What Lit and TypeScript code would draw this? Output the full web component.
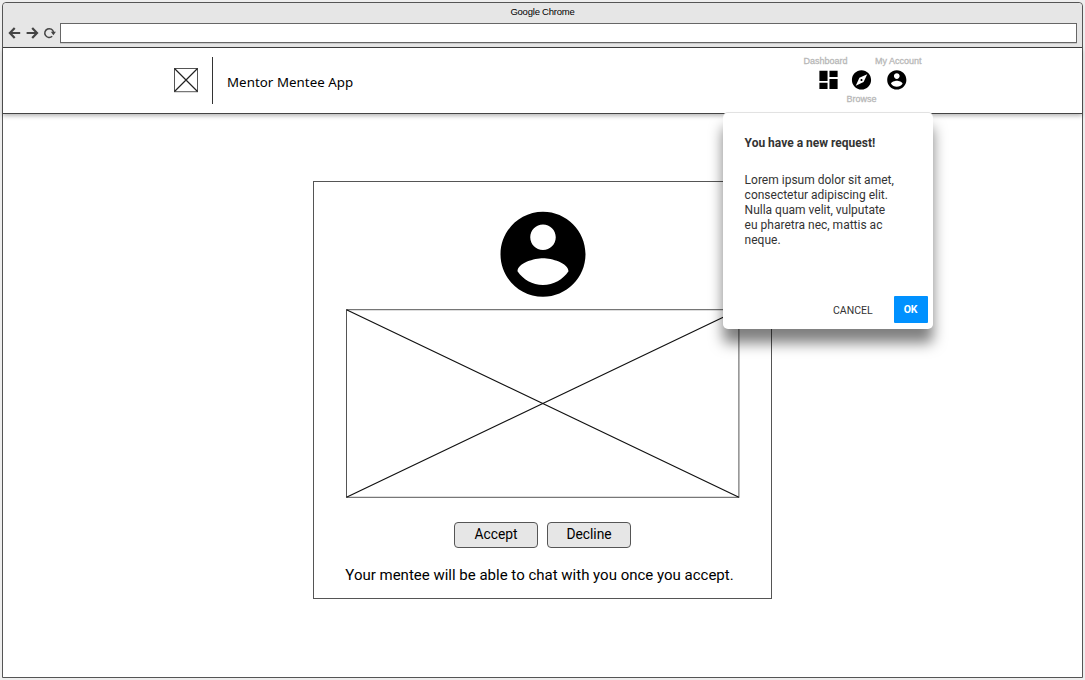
import { LitElement, html, css, svg } from "lit";
import { customElement, property } from "lit/decorators.js";

const accountPath = svg`<path d="M12 2C6.48 2 2 6.48 2 12s4.48 10 10 10 10-4.48 10-10S17.52 2 12 2zm0 3c1.66 0 3 1.34 3 3s-1.34 3-3 3-3-1.34-3-3 1.34-3 3-3zm0 14.2c-2.5 0-4.71-1.28-6-3.22.03-1.99 4-3.08 6-3.08 1.99 0 5.97 1.09 6 3.08-1.29 1.94-3.5 3.22-6 3.22z"/>`;

@customElement("browser-bar")
export class BrowserBar extends LitElement {
  static styles = css`
    :host { display: block; box-sizing: border-box; height: 45px; background: #e6e6e6; border-bottom: 1px solid #3d3d3d; border-radius: 4px 4px 0 0; font-family: "Liberation Sans", Arial, sans-serif; }
    .title { height: 20px; line-height: 18px; font-size: 9.5px; letter-spacing: -0.22px; text-align: center; color: #000; }
    .tools { display: flex; height: 21px; }
    .icons { width: 57px; height: 21px; flex: none; }
    .address { box-sizing: border-box; width: 1017px; height: 20px; border: 1px solid #666; background: #fff; box-shadow: 0 1px #c8c8c8; }
  `;
  render() {
    return html`
      <div class="title">Google Chrome</div>
      <div class="tools">
        <svg class="icons" viewBox="3 23 57 21" fill="none" stroke="#444">
          <path stroke-width="2.2" d="M20.2 33H10M14.7 28L9.9 33l4.8 5M26.6 33H37M32.2 28l4.8 5-4.8 5"/>
          <path stroke-width="1.5" d="M52.2 36.3A4.4 4.4 0 1 1 53.5 32.2"/>
          <path fill="#444" stroke="none" d="M50.8 31.8H55.9L53.4 35.2Z"/>
        </svg>
        <div class="address"></div>
      </div>`;
  }
}

@customElement("app-header")
export class AppHeader extends LitElement {
  static styles = css`
    :host { display: flex; box-sizing: border-box; height: 66px; padding-left: 171px; border-bottom: 1px solid #444; box-shadow: 0 2px 4px rgba(0, 0, 0, 0.28); background: #fff; }
    .logo { width: 25px; height: 25px; margin-top: 20px; flex: none; }
    .rule { width: 1px; height: 47px; margin: 9px 0 0 13px; background: #333; }
    .name { margin: 25px 0 0 14px; width: 577px; font: 13.3px/19px "Noto Sans", sans-serif; letter-spacing: 0.05px; color: #000; white-space: nowrap; }
    nav { width: 120px; font: 9px/10px "Liberation Sans", Arial, sans-serif; color: #b8b8b8; -webkit-text-stroke: 0.3px #b8b8b8; white-space: nowrap; }
    .top { display: flex; justify-content: space-between; width: 118px; margin: 8px 0 0 -0.5px; }
    .glyphs { display: flex; height: 23px; margin: 2px 0 0 13px; }
    .glyphs svg { width: 23px; height: 23px; flex: none; }
    .browse { margin-left: 10px; }
    .account { margin-left: 12px; }
    .bottom { margin: 3px 0 0 42.5px; }
  `;
  render() {
    return html`
      <svg class="logo" viewBox="0 0 25 25" fill="none" stroke="#222">
        <rect x=".5" y=".5" width="23" height="23.2" stroke="#555"/>
        <path stroke-width="1.2" d="M.5.5l23 23M23.5.5l-23 23"/>
      </svg>
      <div class="rule"></div>
      <div class="name">Mentor Mentee App</div>
      <nav>
        <div class="top"><span>Dashboard</span><span>My Account</span></div>
        <div class="glyphs">
          <svg viewBox="0 -0.45 24 24"><path d="M2.5 13H11V2.5H2.5zm0 8.5H11V15H2.5zM13 21.5h8.5V11H13zM13 2.5V9h8.5V2.5z"/></svg>
          <svg class="browse" viewBox="0 -0.45 24 24"><path d="M12 10.9c-.61 0-1.1.49-1.1 1.1s.49 1.1 1.1 1.1 1.1-.49 1.1-1.1-.49-1.1-1.1-1.1zM12 2C6.48 2 2 6.48 2 12s4.48 10 10 10 10-4.48 10-10S17.52 2 12 2zm2.19 12.19L6 18l3.81-8.19L18 6l-3.81 8.19z"/></svg>
          <svg class="account" viewBox="-0.3 -0.45 24 24">${accountPath}</svg>
        </div>
        <div class="bottom">Browse</div>
      </nav>`;
  }
}

@customElement("request-card")
export class RequestCard extends LitElement {
  static styles = css`
    :host { display: flex; flex-direction: column; align-items: center; box-sizing: border-box; width: 459px; height: 418px; border: 1px solid #555; background: #fff; font-family: Roboto, sans-serif; color: #000; }
    .avatar { width: 102px; height: 102px; margin: 21px 0 0 1px; flex: none; }
    .media { width: 394px; height: 189px; margin: 4px 0 0 1px; flex: none; }
    .actions { display: flex; gap: 9px; margin-top: 24px; }
    button { box-sizing: border-box; width: 84px; height: 26px; padding: 0 0 2px; border: 1px solid #555; border-radius: 4px; background: #e6e6e6; font: 13.8px/20px Roboto, sans-serif; color: #000; }
    .note { margin: 17px 0 0 -6px; font-size: 15px; line-height: 20px; white-space: nowrap; }
  `;
  render() {
    return html`
      <svg class="avatar" viewBox="0 -0.08 24 24">${accountPath}</svg>
      <svg class="media" viewBox="0 0 394 189" fill="none">
        <rect x=".5" y=".7" width="392.4" height="187.6" stroke="#555"/>
        <path stroke="#111" stroke-width="1.2" d="M.5.7l392.4 187.6M392.9.7L.5 188.3"/>
      </svg>
      <div class="actions"><button>Accept</button><button>Decline</button></div>
      <div class="note">Your mentee will be able to chat with you once you accept.</div>`;
  }
}

@customElement("request-dialog")
export class RequestDialog extends LitElement {
  @property() heading = "You have a new request!";
  static styles = css`
    :host { display: flex; flex-direction: column; box-sizing: border-box; width: 210px; height: 216px; padding: 22px 5px 6px 22px; border-radius: 5px; background: #fff; box-shadow: 0 -1px #e2e2e2, 0 14px 14px rgba(0, 0, 0, 0.5); font-family: Roboto, sans-serif; color: #333; }
    .heading { font-weight: 700; font-size: 12px; line-height: 16px; white-space: nowrap; }
    .body { margin-top: 22px; font-size: 12px; line-height: 15px; white-space: nowrap; }
    .actions { display: flex; justify-content: flex-end; align-items: center; gap: 21px; margin-top: auto; }
    .cancel { font-size: 10.5px; line-height: 14px; padding-top: 3px; }
    .ok { width: 34px; height: 27px; border-radius: 1px; background: #0091ff; color: #fff; font-weight: 700; font-size: 10.5px; line-height: 28px; text-align: center; }
  `;
  render() {
    return html`
      <div class="heading">${this.heading}</div>
      <div class="body">Lorem ipsum dolor sit amet,<br>consectetur adipiscing elit.<br>Nulla quam velit, vulputate<br>eu pharetra nec, mattis ac<br>neque.</div>
      <div class="actions"><div class="cancel">CANCEL</div><div class="ok">OK</div></div>`;
  }
}

@customElement("app-root")
export class AppRoot extends LitElement {
  static styles = css`
    :host { display: block; box-sizing: border-box; width: 1085px; height: 680px; padding: 2px; background: #eee; overflow: hidden; }
    .window { position: relative; box-sizing: border-box; width: 1081px; height: 676px; border: 1px solid #555; border-radius: 4px 4px 0 0; background: #fff; }
    .content { display: flex; padding: 67px 0 0 310px; }
    .popup { position: absolute; left: 719.6px; top: 109.8px; }
  `;
  render() {
    return html`
      <div class="window">
        <browser-bar></browser-bar>
        <app-header></app-header>
        <div class="content"><request-card></request-card></div>
        <request-dialog class="popup"></request-dialog>
      </div>`;
  }
}
